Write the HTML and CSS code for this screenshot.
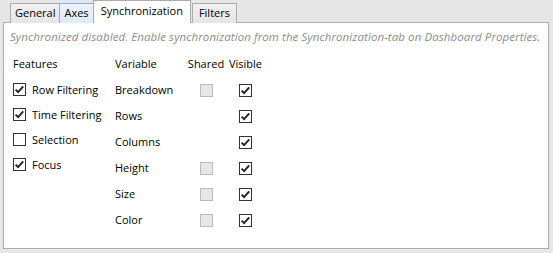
FILE: index.html
```html
<!DOCTYPE html>
<html lang="en">
<head>
  <meta charset="UTF-8">
  <title>Synchronization</title>
  <link rel="stylesheet" href="styles.css">
</head>
<body>
  <div class="window">
    <div class="tab-strip">
      <div class="tab">General</div>
      <div class="tab hover">Axes</div>
      <div class="tab selected">Synchronization</div>
      <div class="tab">Filters</div>
    </div>

    <div class="panel">
      <p class="note">Synchronized disabled. Enable synchronization from the Synchronization-tab on Dashboard Properties.</p>

      <div class="columns">
        <div class="features">
          <div class="head">Features</div>
          <label class="feature"><span class="box checked"></span>Row Filtering</label>
          <label class="feature"><span class="box checked"></span>Time Filtering</label>
          <label class="feature"><span class="box"></span>Selection</label>
          <label class="feature"><span class="box checked"></span>Focus</label>
        </div>

        <div class="variables">
          <div class="head">Variable</div>
          <div class="head">Shared</div>
          <div class="head">Visible</div>

          <div class="name">Breakdown</div>
          <div class="cell"><span class="box disabled"></span></div>
          <div class="cell"><span class="box checked"></span></div>

          <div class="name">Rows</div>
          <div class="cell"></div>
          <div class="cell"><span class="box checked"></span></div>

          <div class="name">Columns</div>
          <div class="cell"></div>
          <div class="cell"><span class="box checked"></span></div>

          <div class="name">Height</div>
          <div class="cell"><span class="box disabled"></span></div>
          <div class="cell"><span class="box checked"></span></div>

          <div class="name">Size</div>
          <div class="cell"><span class="box disabled"></span></div>
          <div class="cell"><span class="box checked"></span></div>

          <div class="name">Color</div>
          <div class="cell"><span class="box disabled"></span></div>
          <div class="cell"><span class="box checked"></span></div>
        </div>
      </div>
    </div>
  </div>
</body>
</html>
```

FILE: styles.css
```css
* {
  margin: 0;
  padding: 0;
  box-sizing: border-box;
}

body {
  font-family: "Open Sans", "Noto Sans", sans-serif;
  font-size: 11px;
  color: #000;
  background: #e6e6e6;
}

.window {
  height: 100vh;
  display: flex;
  flex-direction: column;
  padding: 0 4px 4px 3px;
}

/* tabs */

.tab-strip {
  display: flex;
  align-items: flex-end;
  height: 23px;
  padding-left: 7px;
  margin-bottom: -1px;
  position: relative;
  z-index: 1;
}

.tab {
  height: 20px;
  line-height: 18px;
  padding: 0 4px;
  margin-right: -1px;
  border: 1px solid #acacac;
  border-bottom: none;
  background: linear-gradient(#f0f0f0, #e5e5e5);
}

.tab.hover {
  background: linear-gradient(#ecf4fc, #dcecfc);
  border-color: #7eb4ea;
  position: relative;
}

.tab.selected {
  height: 23px;
  line-height: 20px;
  padding: 0 7px;
  margin-right: 1px;
  background: #fff;
  border-color: #acacac;
}

.tab:last-child {
  padding: 0 6px;
}

/* panel */

.panel {
  flex: 1;
  background: #fff;
  border: 1px solid #acacac;
  padding: 6px 9px 0;
}

.note {
  font-style: italic;
  font-size: 11.5px;
  letter-spacing: 0.08px;
  color: #8c8c8c;
  line-height: 16px;
  white-space: nowrap;
  margin-left: -3px;
  margin-bottom: 6px;
}

.columns {
  display: flex;
}

.head {
  height: 26px;
  line-height: 26px;
}

.features {
  width: 102px;
  display: flex;
  flex-direction: column;
}

.feature {
  height: 25px;
  display: flex;
  align-items: center;
  gap: 6px;
}

.variables {
  display: grid;
  grid-template-columns: 68px 46px auto;
  grid-auto-rows: 26px;
}

.variables .head:not(:first-child) {
  justify-self: center;
}

.name {
  line-height: 26px;
}

.cell {
  display: flex;
  align-items: center;
  justify-content: center;
}

/* checkboxes */

.box {
  width: 13px;
  height: 13px;
  flex: none;
  border: 1px solid #333;
  background: #fff;
  background-position: center;
  background-repeat: no-repeat;
}

.box.checked {
  background-image: url("data:image/svg+xml,%3Csvg xmlns='http://www.w3.org/2000/svg' width='11' height='11' viewBox='0 0 11 11'%3E%3Cpath d='M1.6 5.6 L4.1 8.1 L9.2 2.4' fill='none' stroke='%23222' stroke-width='1.9'/%3E%3C/svg%3E");
}

.box.disabled {
  background: #e6e6e6;
  border-color: #bcbcbc;
}
```
